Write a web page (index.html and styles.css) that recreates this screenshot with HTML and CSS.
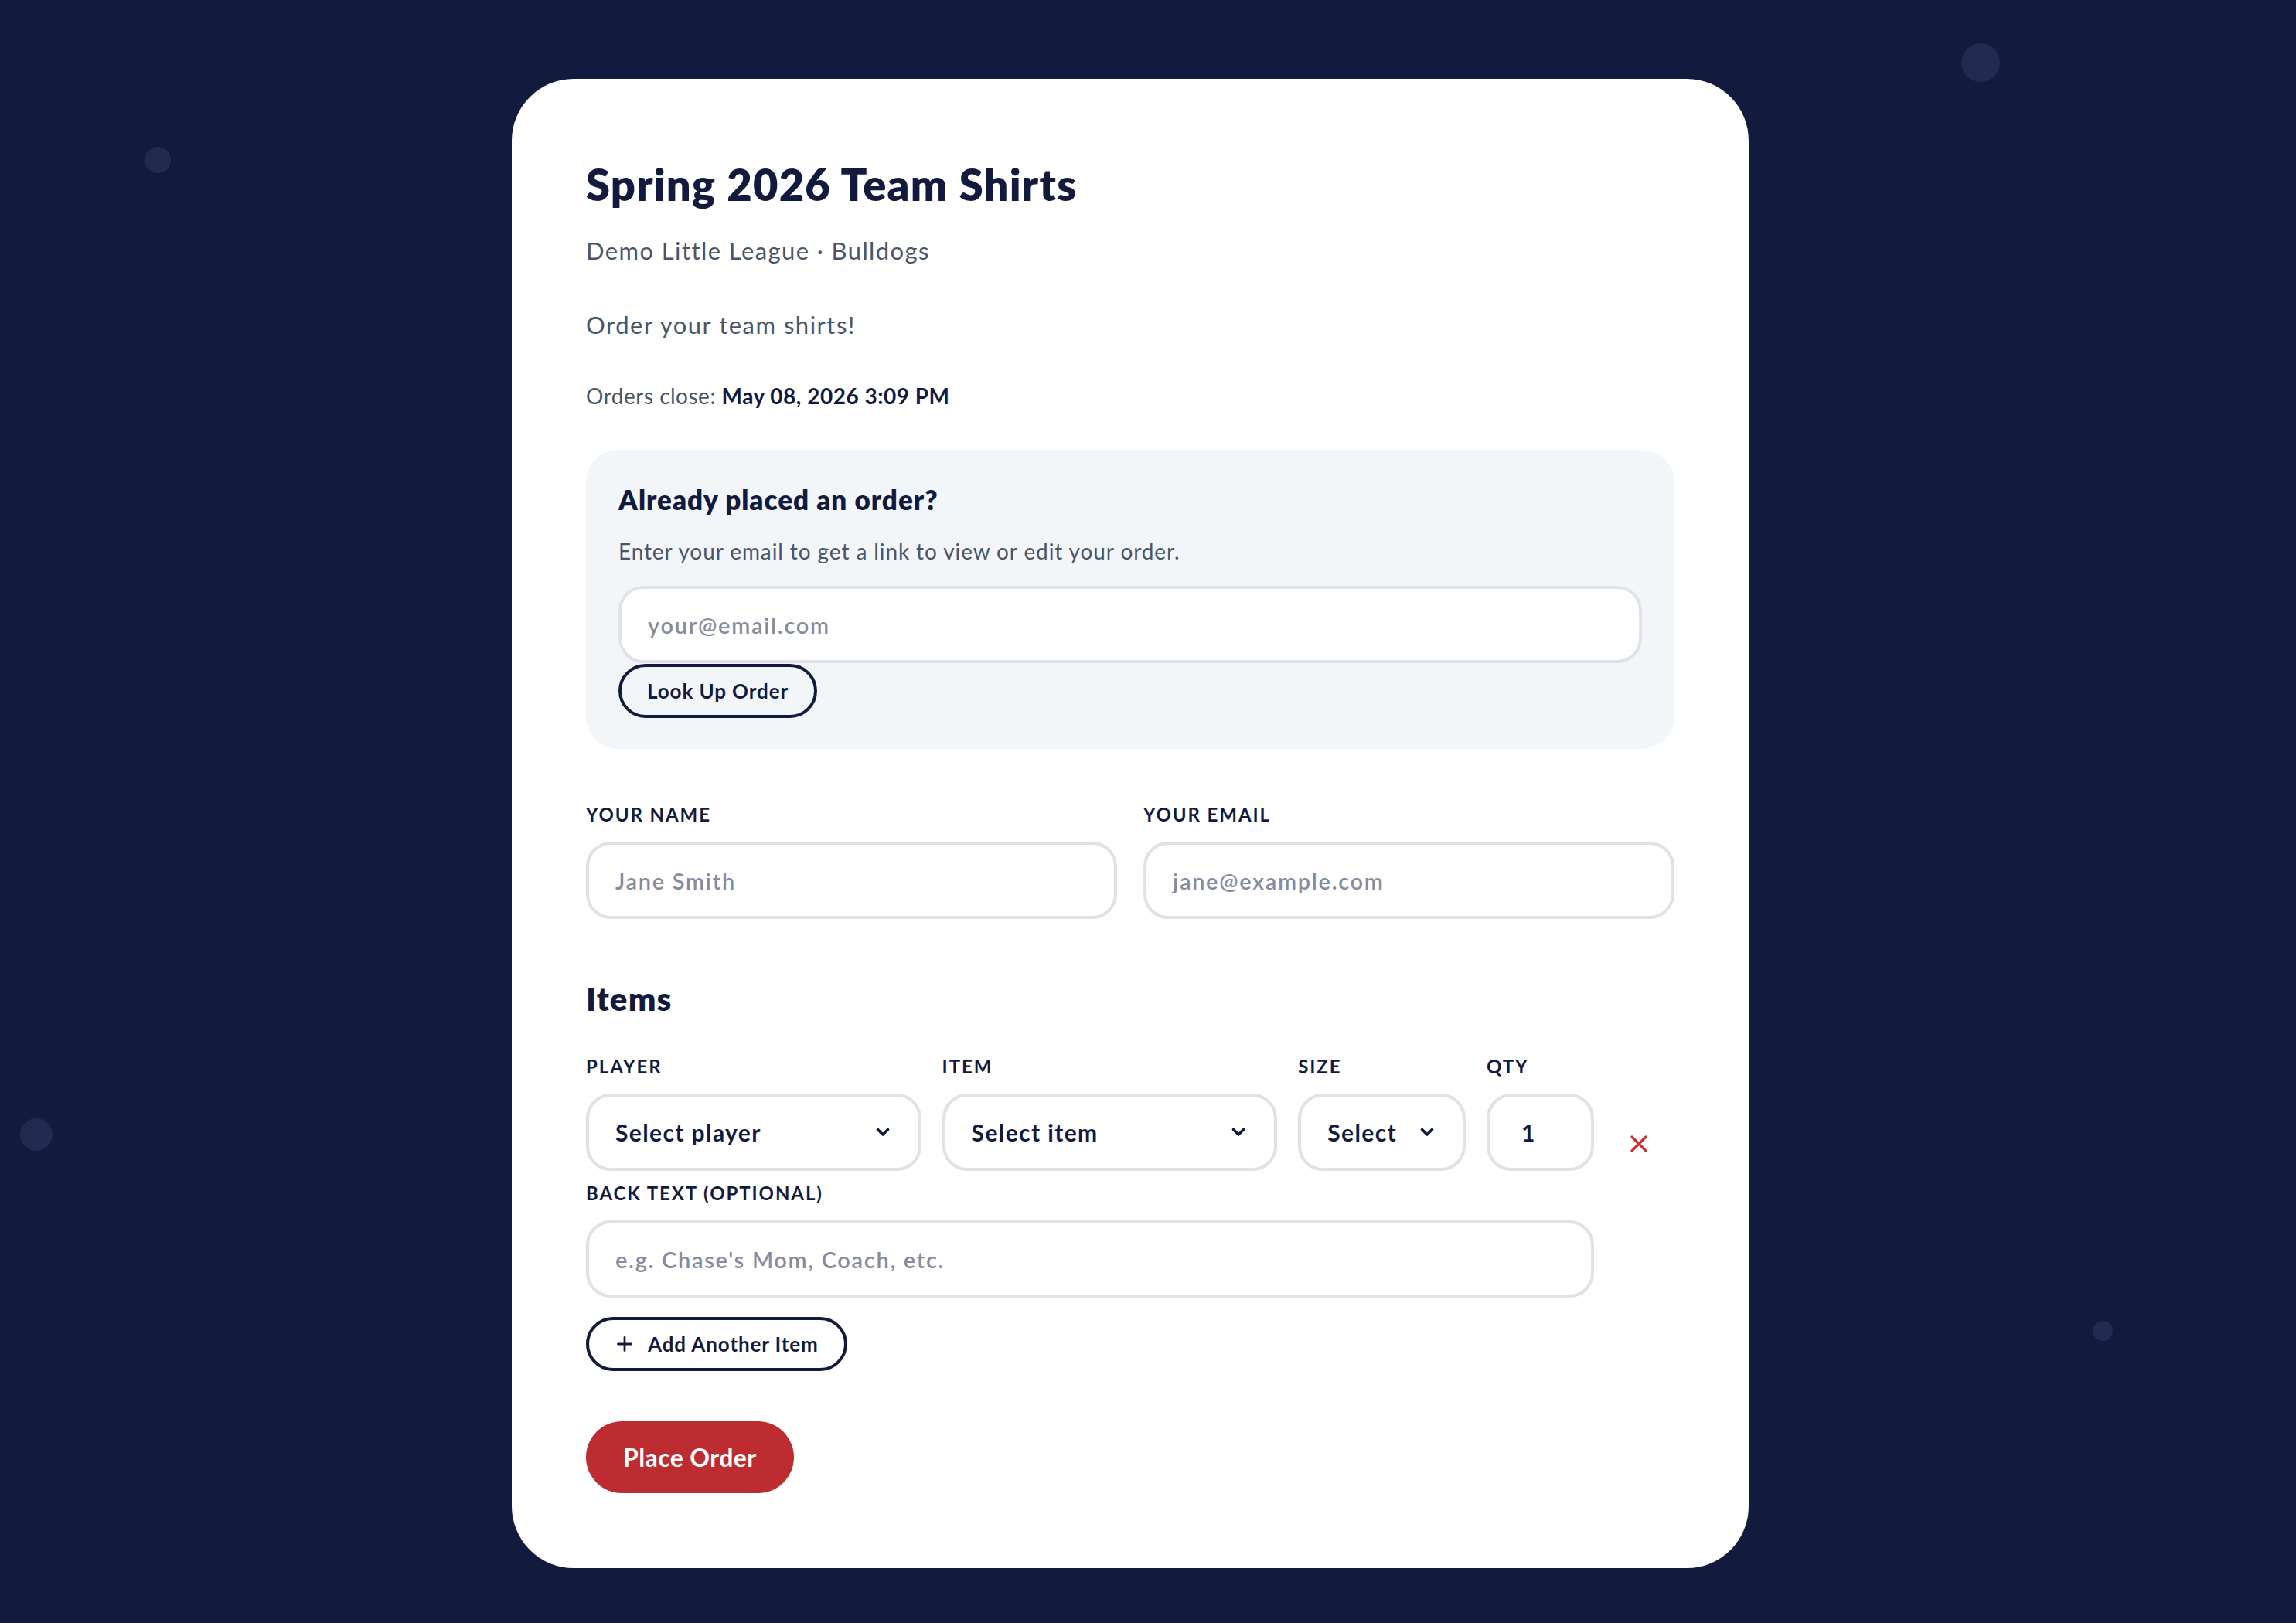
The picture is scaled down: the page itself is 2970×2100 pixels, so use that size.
FILE: index.html
```html
<!DOCTYPE html>
<html lang="en">
<head>
<meta charset="utf-8">
<title>Spring 2026 Team Shirts</title>
<link rel="stylesheet" href="styles.css">
</head>
<body>
<div class="dot dot-1"></div>
<div class="dot dot-2"></div>
<div class="dot dot-3"></div>
<div class="dot dot-4"></div>
<main class="page">
  <section class="card">
    <h1 class="title">Spring 2026 Team Shirts</h1>
    <p class="league">Demo Little League · Bulldogs</p>
    <p class="desc">Order your team shirts!</p>
    <p class="close">Orders close: <strong>May 08, 2026 3:09 PM</strong></p>

    <div class="lookup">
      <h2 class="lookup-title">Already placed an order?</h2>
      <p class="lookup-text">Enter your email to get a link to view or edit your order.</p>
      <div class="input lookup-input"><span class="ph">your@email.com</span></div>
      <button class="btn-outline lookup-btn">Look Up Order</button>
    </div>

    <div class="contact">
      <div class="field">
        <label class="label">Your Name</label>
        <div class="input"><span class="ph">Jane Smith</span></div>
      </div>
      <div class="field">
        <label class="label">Your Email</label>
        <div class="input"><span class="ph">jane@example.com</span></div>
      </div>
    </div>

    <h2 class="items-title">Items</h2>

    <div class="item">
      <div class="field">
        <label class="label">Player</label>
        <div class="input select"><span>Select player</span>
          <svg class="chev" width="18" height="12" viewBox="0 0 18 12"><path d="M2.5 2.5 L9 9 L15.5 2.5" fill="none" stroke="#121b3e" stroke-width="3.6" stroke-linecap="round" stroke-linejoin="round"/></svg>
        </div>
      </div>
      <div class="field">
        <label class="label">Item</label>
        <div class="input select"><span>Select item</span>
          <svg class="chev" width="18" height="12" viewBox="0 0 18 12"><path d="M2.5 2.5 L9 9 L15.5 2.5" fill="none" stroke="#121b3e" stroke-width="3.6" stroke-linecap="round" stroke-linejoin="round"/></svg>
        </div>
      </div>
      <div class="field">
        <label class="label">Size</label>
        <div class="input select"><span>Select</span>
          <svg class="chev" width="18" height="12" viewBox="0 0 18 12"><path d="M2.5 2.5 L9 9 L15.5 2.5" fill="none" stroke="#121b3e" stroke-width="3.6" stroke-linecap="round" stroke-linejoin="round"/></svg>
        </div>
      </div>
      <div class="field">
        <label class="label">Qty</label>
        <div class="input qty"><span>1</span></div>
      </div>
      <button class="remove" aria-label="Remove item">
        <svg width="22" height="22" viewBox="0 0 22 22"><path d="M2 2 L20 20 M20 2 L2 20" fill="none" stroke="#c8302f" stroke-width="3.2" stroke-linecap="round"/></svg>
      </button>
      <div class="field back">
        <label class="label">Back Text (Optional)</label>
        <div class="input"><span class="ph">e.g. Chase's Mom, Coach, etc.</span></div>
      </div>
    </div>

    <button class="btn-outline add-btn">
      <svg width="20" height="20" viewBox="0 0 20 20"><path d="M10 1.5 V18.5 M1.5 10 H18.5" fill="none" stroke="#121b3e" stroke-width="2.8" stroke-linecap="round"/></svg>
      <span>Add Another Item</span>
    </button>

    <button class="btn-primary">Place Order</button>
  </section>
</main>
</body>
</html>
```

FILE: styles.css
```css
* { box-sizing: border-box; }

html, body {
  margin: 0;
  padding: 0;
}

body {
  background: #121b3e;
  min-height: 2100px;
  font-family: "Lato", "Noto Sans", sans-serif;
  color: #121b3e;
  position: relative;
  overflow: hidden;
}

.dot {
  position: absolute;
  border-radius: 50%;
  background: #212b4f;
}
.dot-1 { width: 50px; height: 50px; left: 2537px; top: 56px; }
.dot-2 { width: 34px; height: 34px; left: 187px; top: 190px; }
.dot-3 { width: 42px; height: 42px; left: 26px; top: 1447px; }
.dot-4 { width: 26px; height: 26px; left: 2707px; top: 1709px; }

.page {
  display: flex;
  justify-content: center;
  padding: 102px 46px 73px 0;
  position: relative;
}

.card {
  width: 1600px;
  background: #ffffff;
  border-radius: 80px;
  padding: 97px 96px 97px;
  display: flex;
  flex-direction: column;
  align-items: flex-start;
}

.title {
  margin: 6px 0 0;
  font-size: 56px;
  line-height: 67px;
  font-weight: 800;
  letter-spacing: 1.2px;
}

.league, .desc {
  margin: 0;
  font-size: 31px;
  line-height: 36px;
  color: #4a5568;
}
.league { margin-top: 34px; letter-spacing: 1.4px; }
.desc { margin-top: 60px; letter-spacing: 1.5px; }

.close {
  margin: 57px 0 0;
  font-size: 28px;
  line-height: 34px;
  color: #4a5568;
  letter-spacing: 0.5px;
}
.close strong {
  color: #121b3e;
  font-weight: 700;
}

.lookup {
  align-self: stretch;
  margin-top: 53px;
  background: #f3f6f9;
  border-radius: 42px;
  padding: 43px 42px 40px;
  display: flex;
  flex-direction: column;
  align-items: flex-start;
}

.lookup-title {
  margin: 0;
  font-size: 35px;
  line-height: 42px;
  font-weight: 800;
  letter-spacing: 1px;
}

.lookup-text {
  margin: 29px 0 0;
  font-size: 28px;
  line-height: 34px;
  color: #4a5568;
  letter-spacing: 0.9px;
}

.input {
  height: 100px;
  border: 4px solid #e1e2e8;
  border-radius: 32px;
  background: #ffffff;
  padding: 0 34px;
  display: flex;
  align-items: center;
  font-size: 29px;
  color: #121b3e;
}
.ph {
  color: #868b9e;
  font-weight: 600;
  letter-spacing: 1.7px;
}

.lookup-input {
  align-self: stretch;
  margin-top: 28px;
}

.btn-outline {
  font-family: inherit;
  background: transparent;
  border: 4px solid #121b3e;
  border-radius: 999px;
  height: 70px;
  color: #121b3e;
  font-weight: 700;
  font-size: 26px;
  letter-spacing: 0.9px;
  display: flex;
  align-items: center;
  cursor: pointer;
}

.lookup-btn {
  margin-top: 1px;
  padding: 0 33px;
}

.contact {
  align-self: stretch;
  margin-top: 70px;
  display: grid;
  grid-template-columns: 1fr 1fr;
  column-gap: 34px;
}

.field {
  display: flex;
  flex-direction: column;
}

.label {
  font-size: 24px;
  line-height: 29px;
  font-weight: 700;
  text-transform: uppercase;
  letter-spacing: 0.08em;
  color: #121b3e;
  margin-bottom: 21px;
}

.items-title {
  margin: 78px 0 0;
  font-size: 42px;
  line-height: 50px;
  font-weight: 800;
  letter-spacing: 1.2px;
}

.item {
  align-self: stretch;
  margin-top: 48px;
  display: grid;
  grid-template-columns: 2fr 2fr 1fr 139px 77px;
  column-gap: 27px;
  row-gap: 14px;
}

.select {
  justify-content: space-between;
  font-weight: 700;
  font-size: 30px;
  letter-spacing: 1.4px;
  padding: 0 37px 0 34px;
}
.chev { flex: none; }

.qty {
  font-weight: 700;
  font-size: 30px;
  padding-left: 41px;
}

.remove {
  align-self: end;
  justify-self: start;
  width: 62px;
  height: 70px;
  padding: 0;
  border: none;
  background: transparent;
  display: flex;
  align-items: center;
  justify-content: center;
  cursor: pointer;
}

.back {
  grid-column: 1 / 5;
}

.add-btn {
  margin-top: 25px;
  padding: 0 33px 0 36px;
  gap: 20px;
}
.add-btn svg { flex: none; }

.btn-primary {
  margin-top: 65px;
  height: 93px;
  padding: 0 48px;
  border: none;
  border-radius: 999px;
  background: #bd2c31;
  color: #ffffff;
  font-family: inherit;
  font-weight: 700;
  font-size: 32px;
  letter-spacing: 0.4px;
  cursor: pointer;
}
```
